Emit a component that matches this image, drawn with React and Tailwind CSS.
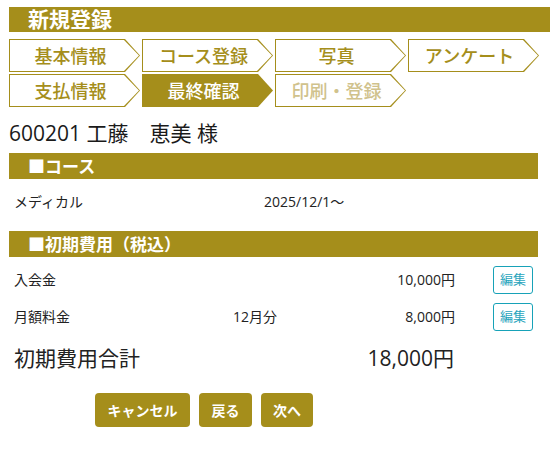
import React from "react";

const tabs = [
  { label: "基本情報", state: "normal" },
  { label: "コース登録", state: "normal" },
  { label: "写真", state: "normal" },
  { label: "アンケート", state: "normal" },
  { label: "支払情報", state: "normal" },
  { label: "最終確認", state: "active" },
  { label: "印刷・登録", state: "disabled" },
];

function Tab({ label, state }) {
  const active = state === "active";
  return (
    <div className="relative h-[33px] w-[131px] bg-[#a58e1b] [clip-path:polygon(0_0,calc(100%_-_15px)_0,100%_50%,calc(100%_-_15px)_100%,0_100%)]">
      {!active && (
        <div className="absolute inset-[1px] bg-white [clip-path:polygon(0_0,calc(100%_-_15px)_0,100%_50%,calc(100%_-_15px)_100%,0_100%)]" />
      )}
      <div
        className={
          "relative flex h-full items-center justify-center pr-[8px] text-[18px] font-medium leading-none " +
          (active
            ? "text-white"
            : state === "disabled"
            ? "text-[#d0c28c]"
            : "text-[#a58e1b]")
        }
      >
        {label}
      </div>
    </div>
  );
}

function SectionBar({ children }) {
  return (
    <div className="ml-[9px] flex h-[26px] w-[529px] items-center bg-[#a58e1b] pl-[19px] text-[17px] font-bold leading-none text-white">
      {children}
    </div>
  );
}

function EditButton() {
  return (
    <button className="flex h-[28px] w-[40px] items-center justify-center rounded-[3px] border border-[#17a2b8] bg-white text-[13px] leading-none text-[#2aa5bd]">
      編集
    </button>
  );
}

export default function App() {
  return (
    <div className="h-[471px] w-[550px] overflow-hidden bg-white pt-[7px] font-['Open_Sans','Noto_Sans_CJK_JP',sans-serif] text-[#222]">
      <div className="ml-[9px] flex h-[25px] items-center bg-[#a58e1b] pl-[19px] text-[21px] font-bold leading-none text-white">
        新規登録
      </div>

      <div className="ml-[9px] mt-[7px] grid grid-cols-[repeat(4,131px)] gap-x-[2px] gap-y-[2px]">
        {tabs.map((t) => (
          <Tab key={t.label} label={t.label} state={t.state} />
        ))}
      </div>

      <div className="ml-[9px] mt-[12px] h-[28px] text-[21px] leading-[28px] text-[#1a1a1a]">
        600201 工藤　恵美 様
      </div>

      <div className="mt-[6px]">
        <SectionBar>■コース</SectionBar>
      </div>

      <div className="grid h-[44px] grid-cols-[250px_1fr] items-center pl-[14px] text-[14px]">
        <div>メディカル</div>
        <div>2025/12/1〜</div>
      </div>

      <div className="mt-[8px]">
        <SectionBar>■初期費用（税込）</SectionBar>
      </div>

      <div className="mt-[4px] text-[14px]">
        <div className="grid h-[37px] grid-cols-[219px_100px_122px_38px_40px] items-center pl-[14px]">
          <div>入会金</div>
          <div></div>
          <div className="text-right">10,000円</div>
          <div></div>
          <EditButton />
        </div>
        <div className="grid h-[37px] grid-cols-[219px_100px_122px_38px_40px] items-center pl-[14px]">
          <div>月額料金</div>
          <div>12月分</div>
          <div className="text-right">8,000円</div>
          <div></div>
          <EditButton />
        </div>
      </div>

      <div className="grid h-[46px] grid-cols-[319px_121px] items-center pl-[14px] text-[21px] leading-none">
        <div>初期費用合計</div>
        <div className="text-right">18,000円</div>
      </div>

      <div className="ml-[95px] mt-[12px] flex gap-[9px]">
        <button className="h-[34px] w-[95px] rounded-[4px] bg-[#a58e1b] text-[14px] font-bold text-white">
          キャンセル
        </button>
        <button className="h-[34px] w-[53px] rounded-[4px] bg-[#a58e1b] text-[14px] font-bold text-white">
          戻る
        </button>
        <button className="h-[34px] w-[52px] rounded-[4px] bg-[#a58e1b] text-[14px] font-bold text-white">
          次へ
        </button>
      </div>
    </div>
  );
}
